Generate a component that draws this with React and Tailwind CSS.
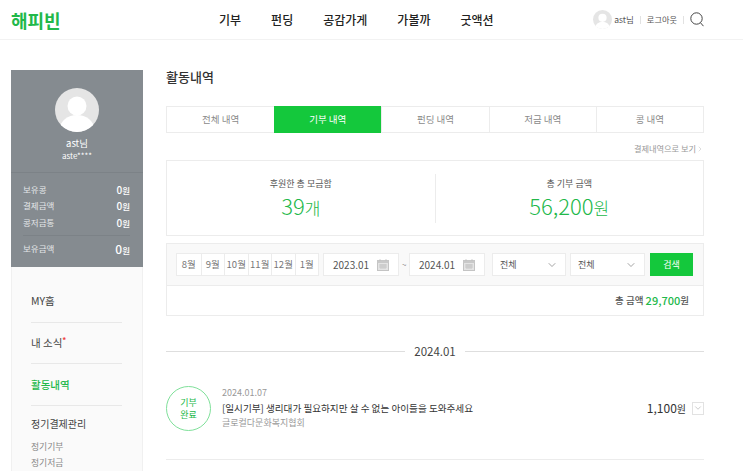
import { ChevronDown, ChevronRight } from 'lucide-react';

const FONT = { fontFamily: '"Noto Sans CJK KR", "Noto Sans", sans-serif' };

function Avatar({ size }) {
  return (
    <svg width={size} height={size} viewBox="0 0 44 44" className="shrink-0">
      <defs>
        <clipPath id={`clip${size}`}>
          <circle cx="22" cy="22" r="22" />
        </clipPath>
      </defs>
      <g clipPath={`url(#clip${size})`}>
        <rect width="44" height="44" fill="#e5e5e5" />
        <circle cx="22" cy="18" r="9.5" fill="#fff" />
        <ellipse cx="22" cy="41" rx="17" ry="14" fill="#fff" />
      </g>
    </svg>
  );
}

function CalendarIcon() {
  return (
    <svg width="12" height="12" viewBox="0 0 12 12" className="shrink-0">
      <rect x="0.5" y="1.5" width="11" height="10" fill="#e4e4e4" stroke="#c4c4c4" />
      <rect x="0.5" y="1.5" width="11" height="2.5" fill="#c9c9c9" />
      <path d="M3 0v2M9 0v2M2 6h8M2 8h8M4 5v5M6 5v5M8 5v5" stroke="#bdbdbd" strokeWidth="0.7" />
    </svg>
  );
}

function Header() {
  const nav = ['기부', '펀딩', '공감가게', '가볼까', '굿액션'];
  return (
    <header className="flex h-10 items-center border-b border-[#f2f2f2] bg-white">
      <div className="w-[219px] pl-[11px] text-[18px] font-bold leading-[34px] text-[#22b84a]">해피빈</div>
      <nav className="flex gap-[30px] text-[12px] font-medium text-[#222]">
        {nav.map((n) => (
          <span key={n}>{n}</span>
        ))}
      </nav>
      <div className="ml-auto flex items-center pr-[39px] text-[8.5px] text-[#555]">
        <Avatar size={19} />
        <span className="ml-[2px]">ast님</span>
        <span className="mx-[6px] h-[8px] w-px bg-[#e2e2e2]" />
        <span className="text-[8.2px]">로그아웃</span>
        <span className="mx-[6px] h-[8px] w-px bg-[#e2e2e2]" />
        <svg width="14" height="15" viewBox="0 0 14 15" fill="none" stroke="#444" strokeWidth="1">
          <circle cx="6.5" cy="6.5" r="5.7" />
          <path d="M10.5 10.8l3 3.4" />
        </svg>
      </div>
    </header>
  );
}

function Row({ label, big }) {
  return (
    <div className="flex h-[16.5px] items-center justify-between text-[8.5px] text-[#e4e6e8]">
      <span>{label}</span>
      <span className="font-medium text-white">
        <span className={big ? 'text-[12px]' : 'text-[10px]'}>0</span>원
      </span>
    </div>
  );
}

function Sidebar() {
  return (
    <aside className="h-[431px] w-[132px] shrink-0 border-x border-[#f0f0f0] bg-[#fafafa]">
      <div className="-mx-px h-[197px] bg-[#858b90]">
        <div className="flex h-[102px] flex-col items-center pt-[18px] text-white">
          <Avatar size={44} />
          <div className="mt-[4px] text-[9.5px] leading-[14px]">ast님</div>
          <div className="text-[8px] leading-[11px]">aste****</div>
        </div>
        <div className="border-t border-[#7c8287] pl-[12px] pr-[13px] pt-[8px]">
          <Row label="보유콩" />
          <Row label="결제금액" />
          <Row label="콩저금통" />
          <div className="mt-[4px] border-t border-[#7c8287] pt-[5px]">
            <Row label="보유금액" big />
          </div>
        </div>
      </div>
      <div className="pl-[19px] pr-[20px] text-[10.5px] text-[#444]">
        <div className="flex h-[56px] items-center border-b border-[#e8e8e8] pt-[12px]">MY홈</div>
        <div className="flex h-[41px] items-center border-b border-[#e8e8e8]">
          내 소식<span className="mb-[6px] text-[8px] font-bold text-[#f04040]">*</span>
        </div>
        <div className="flex h-[42px] items-center border-b border-[#e8e8e8] font-medium text-[#22b84a]">활동내역</div>
        <div className="pt-[10px] text-[10px] leading-[16px]">정기결제관리</div>
        <div className="mt-[7px] text-[8.8px] leading-[16px] text-[#888]">정기기부</div>
        <div className="text-[8.8px] leading-[16px] text-[#888]">정기저금</div>
      </div>
    </aside>
  );
}

function Tabs() {
  const tabs = ['전체 내역', '기부 내역', '펀딩 내역', '저금 내역', '콩 내역'];
  return (
    <div className="mt-[21px] grid h-[27px] grid-cols-5 border border-[#ececec] text-[9.5px] text-[#8a8a8a]">
      {tabs.map((t, i) => (
        <div
          key={t}
          className={
            i === 1
              ? '-my-px flex items-center justify-center bg-[#14c83c] text-white'
              : 'flex items-center justify-center border-l border-[#ececec] first:border-l-0'
          }
        >
          {t}
        </div>
      ))}
    </div>
  );
}

function Summary() {
  return (
    <div className="mt-[6px] flex h-[76px] items-center border border-[#ececec]">
      <div className="flex h-[49px] flex-1 flex-col items-center justify-center border-r border-[#ececec] pt-[2px]">
        <div className="text-[9px] leading-[14px] text-[#555]">후원한 총 모금함</div>
        <div className="text-[22px] font-light leading-[28px] text-[#22b84a]">
          39<span className="text-[17px]">개</span>
        </div>
      </div>
      <div className="flex h-[49px] flex-1 flex-col items-center justify-center pt-[2px]">
        <div className="text-[9px] leading-[14px] text-[#555]">총 기부 금액</div>
        <div className="text-[22px] font-light leading-[28px] text-[#22b84a]">
          56,200<span className="text-[17px]">원</span>
        </div>
      </div>
    </div>
  );
}

function DateBox({ value }) {
  return (
    <div className="flex h-[23px] w-[76px] items-center justify-between border border-[#ececec] bg-white pl-[9px] pr-[9px] text-[10px] text-[#555]">
      {value}
      <CalendarIcon />
    </div>
  );
}

function SelectBox({ w }) {
  return (
    <div className={`flex h-[23px] ${w} items-center justify-between border border-[#ececec] bg-white pl-[7px] pr-[7px] text-[9px] text-[#555]`}>
      전체
      <ChevronDown size={12} strokeWidth={1.2} color="#666" />
    </div>
  );
}

function Filter() {
  const months = ['8월', '9월', '10월', '11월', '12월', '1월'];
  return (
    <div className="mt-[7px] border border-[#ececec]">
      <div className="flex h-[42px] items-center border-b border-[#ececec] bg-[#f9f9f9] pl-[9px]">
        <div className="flex h-[23px] border border-[#ececec] bg-white text-[9.5px] text-[#777]">
          {months.map((m) => (
            <div key={m} className="flex w-[23.5px] items-center justify-center border-l border-[#ececec] first:border-l-0">
              {m}
            </div>
          ))}
        </div>
        <div className="ml-[4px]">
          <DateBox value="2023.01" />
        </div>
        <span className="mx-[3px] w-[4px] text-[8px] text-[#888]">~</span>
        <DateBox value="2024.01" />
        <div className="ml-[7px]">
          <SelectBox w="w-[74px]" />
        </div>
        <div className="ml-[4px]">
          <SelectBox w="w-[75px]" />
        </div>
        <div className="ml-[5px] flex h-[23px] w-[43px] items-center justify-center bg-[#14c83c] text-[9px] text-white">검색</div>
      </div>
      <div className="flex h-[29px] items-center justify-end pr-[14px] text-[9.5px] font-medium text-[#555]">
        총 금액&nbsp;<span className="text-[11px] text-[#22b84a]">29,700</span>원
      </div>
    </div>
  );
}

function Donation() {
  return (
    <div className="flex h-[95px] items-center border-b border-[#ececec] pb-[8px]">
      <div className="flex h-[45px] w-[45px] shrink-0 flex-col items-center justify-center gap-px rounded-full border border-[#7fe09a] text-[9px] leading-[13px] text-[#22b84a]">
        <span className="h-[11px] leading-[11px]">기부</span>
        <span className="h-[11px] leading-[11px]">완료</span>
      </div>
      <div className="ml-[11px] flex-1">
        <div className="text-[9px] leading-[13px] text-[#999]">2024.01.07</div>
        <div className="mt-[2px] text-[9.6px] leading-[15px] text-[#333]">[일시기부] 생리대가 필요하지만 살 수 없는 아이들을 도와주세요</div>
        <div className="text-[9px] leading-[14px] text-[#999]">글로컬다문화복지협회</div>
      </div>
      <div className="text-[12px] text-[#333]">
        1,100<span className="text-[10px]">원</span>
      </div>
      <div className="ml-[6px] flex h-[13px] w-[12px] items-center justify-center border border-[#e2e2e2]">
        <ChevronDown size={10} strokeWidth={1.2} color="#999" className="shrink-0" />
      </div>
    </div>
  );
}

export default function App() {
  return (
    <div className="h-[471px] w-[743px] overflow-hidden bg-white" style={FONT}>
      <Header />
      <div className="flex pl-[11px] pt-[30px]">
        <Sidebar />
        <main className="ml-[23px] w-[538px]">
          <h1 className="-mt-px text-[13px] font-medium leading-[16px] text-[#333]">활동내역</h1>
          <Tabs />
          <div className="mt-[10px] flex items-center justify-end text-[8.2px] leading-[11px] text-[#999]">
            결제내역으로 보기
            <ChevronRight size={8} strokeWidth={1} />
          </div>
          <Summary />
          <Filter />
          <div className="mt-[28px] flex items-center gap-[9px]">
            <div className="h-px flex-1 bg-[#dedede]" />
            <span className="text-[11.5px] leading-[14px] text-[#444]">2024.01</span>
            <div className="h-px flex-1 bg-[#dedede]" />
          </div>
          <div className="mt-[7px]">
            <Donation />
          </div>
        </main>
      </div>
    </div>
  );
}
